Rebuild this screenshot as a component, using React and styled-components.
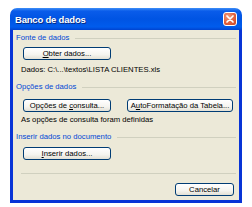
import React from 'react';
import styled, { createGlobalStyle } from 'styled-components';

const Global = createGlobalStyle`
    body {
        margin:0;
        background:#fff;
        font-family:"Liberation Sans", Arial, sans-serif;
    }
`;

function App() {
    return (
        <>
            <Global />
            <Window>
                <TitleBar>
                    <Title>Banco de dados</Title>
                    <CloseButton>
                        <svg width="8" height="8" viewBox="0 0 8 8">
                            <path d="M1 1 L7 7 M7 1 L1 7" stroke="#fff" strokeWidth="1.7" strokeLinecap="round" />
                        </svg>
                    </CloseButton>
                </TitleBar>
                <Body>
                    <GroupLabel top={3}>Fonte de dados</GroupLabel>
                    <Button top={4}><u>O</u>bter dados...</Button>
                    <Text top={5}>Dados: C:\...\textos\LISTA CLIENTES.xls</Text>

                    <GroupLabel top={7}>Opções de dados</GroupLabel>
                    <ButtonRow>
                        <Button>Opções de{' '}<u>c</u>onsulta...</Button>
                        <Button wide>A<u>u</u>toFormatação da Tabela...</Button>
                    </ButtonRow>
                    <Text top={3}>As opções de consulta foram definidas</Text>

                    <GroupLabel top={7}>Inserir dados no documento</GroupLabel>
                    <Button top={5}><u>I</u>nserir dados...</Button>

                    <Separator />
                    <Footer>
                        <Button small>Cancelar</Button>
                    </Footer>
                </Body>
            </Window>
        </>
    );
}

export default App;

const Window = styled.div`
    width:232px;
    margin:8px 0 0 10px;
    display:flex;
    flex-direction:column;
`;
const TitleBar = styled.div`
    height:22px;
    box-sizing:border-box;
    border-radius:7px 7px 0 0;
    background:linear-gradient(180deg, #3d8ef7 0%, #0a5cea 14%, #0054e3 50%, #005ced 86%, #0043cf 100%);
    display:flex;
    align-items:center;
    justify-content:space-between;
    padding:0 5px 0 5px;
`;
const Title = styled.div`
    color:#fff;
    font-size:9.5px;
    font-weight:bold;
    text-shadow:1px 1px 0 #0a2a80;
    letter-spacing:-0.2px;
`;
const CloseButton = styled.div`
    width:14px;
    height:14px;
    box-sizing:border-box;
    border:1px solid #fff;
    border-radius:3px;
    background:radial-gradient(circle at 35% 30%, #f29a7c 0%, #e1603d 55%, #c94424 100%);
    display:flex;
    align-items:center;
    justify-content:center;
`;
const Body = styled.div`
    background:#ece9d8;
    border:3px solid #0834d6;
    border-top:none;
    padding:0 3px 4px 3px;
    display:flex;
    flex-direction:column;
    font-size:7.7px;
    color:#000;
`;
const GroupLabel = styled.div`
    margin-top:${props => props.top || 0}px;
    height:10px;
    line-height:10px;
    color:#0046d5;
    display:flex;
    align-items:center;
    white-space:nowrap;
    &::after {
        content:"";
        flex:1;
        margin-left:6px;
        border-top:1px solid #d0d0bf;
    }
`;
const Button = styled.div`
    margin-top:${props => props.top || 0}px;
    margin-left:${props => props.small ? 0 : 7}px;
    width:${props => props.wide ? 106 : props.small ? 59 : 88}px;
    height:13px;
    box-sizing:border-box;
    border:1px solid #003c74;
    border-radius:3px;
    background:linear-gradient(180deg, #ffffff 0%, #f5f4ef 60%, #e3e0d5 100%);
    display:flex;
    align-items:center;
    justify-content:center;
    white-space:pre;
    u {
        text-decoration:underline;
    }
`;
const ButtonRow = styled.div`
    margin-top:7px;
    display:flex;
    gap:9px;
`;
const Text = styled.div`
    margin-top:${props => props.top || 0}px;
    margin-left:5px;
    height:10px;
    line-height:10px;
    white-space:nowrap;
`;
const Separator = styled.div`
    margin:13px 0 0 5px;
    border-top:1px solid #d0d0bf;
`;
const Footer = styled.div`
    margin-top:9px;
    display:flex;
    justify-content:flex-end;
    padding-right:2px;
`;
